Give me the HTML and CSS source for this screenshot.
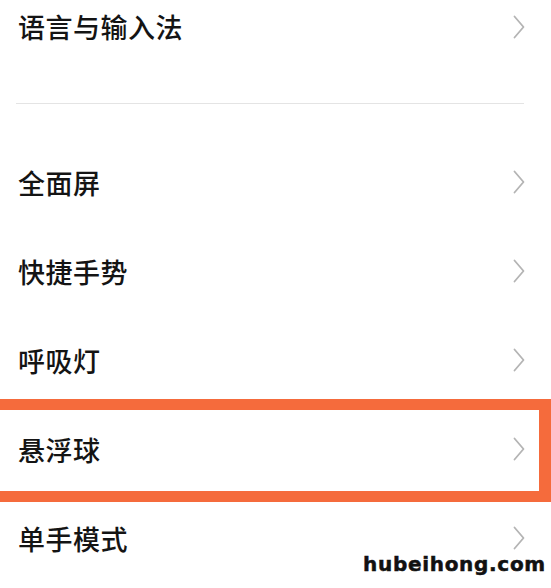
FILE: index.html
```html
<!DOCTYPE html>
<html lang="zh">
<head>
<meta charset="utf-8">
<title>设置</title>
<link rel="stylesheet" href="styles.css">
</head>
<body>
<div class="page">
  <div class="row first"><span class="label">语言与输入法</span><svg class="chev" viewBox="0 0 12 24"><polyline points="1.5,1.5 10.5,12 1.5,22.5"/></svg></div>
  <div class="divider"></div>
  <div class="group">
    <div class="row"><span class="label">全面屏</span><svg class="chev" viewBox="0 0 12 24"><polyline points="1.5,1.5 10.5,12 1.5,22.5"/></svg></div>
    <div class="row"><span class="label">快捷手势</span><svg class="chev" viewBox="0 0 12 24"><polyline points="1.5,1.5 10.5,12 1.5,22.5"/></svg></div>
    <div class="row"><span class="label">呼吸灯</span><svg class="chev" viewBox="0 0 12 24"><polyline points="1.5,1.5 10.5,12 1.5,22.5"/></svg></div>
    <div class="row"><span class="label">悬浮球</span><svg class="chev" viewBox="0 0 12 24"><polyline points="1.5,1.5 10.5,12 1.5,22.5"/></svg></div>
    <div class="row"><span class="label">单手模式</span><svg class="chev" viewBox="0 0 12 24"><polyline points="1.5,1.5 10.5,12 1.5,22.5"/></svg></div>
  </div>
  <div class="highlight"></div>
  <div class="watermark">hubeihong.com</div>
</div>
</body>
</html>
```
FILE: styles.css
```css
html, body {
  margin: 0;
  padding: 0;
  background: #ffffff;
}
.page {
  position: relative;
  width: 551px;
  height: 588px;
  overflow: hidden;
  font-family: "Noto Sans CJK SC", "Noto Sans", sans-serif;
}
.row {
  display: flex;
  align-items: center;
  justify-content: space-between;
  box-sizing: border-box;
  height: 89px;
  padding: 0 26px 3px 18px;
}
.row.first {
  height: 56px;
}
.label {
  font-size: 27px;
  font-weight: 500;
  color: #141414;
  letter-spacing: 0.5px;
  line-height: 1;
}
.chev {
  width: 12px;
  height: 24px;
  fill: none;
  stroke: #b4b4b4;
  stroke-width: 1.8;
  stroke-linecap: round;
  stroke-linejoin: round;
}
.divider {
  height: 1px;
  background: #e4e4e4;
  margin: 47px 27px 0 16px;
}
.group {
  padding-top: 35px;
}
.highlight {
  position: absolute;
  left: -12px;
  top: 399px;
  right: 0;
  height: 81px;
  border: 11px solid #f56b3c;
  border-right-width: 12px;
}
.watermark {
  position: absolute;
  left: 363px;
  top: 552px;
  font-family: "DejaVu Sans", sans-serif;
  font-weight: bold;
  font-size: 20px;
  letter-spacing: 0.7px;
  color: #111;
  -webkit-text-stroke: 0.5px #111;
}
```
